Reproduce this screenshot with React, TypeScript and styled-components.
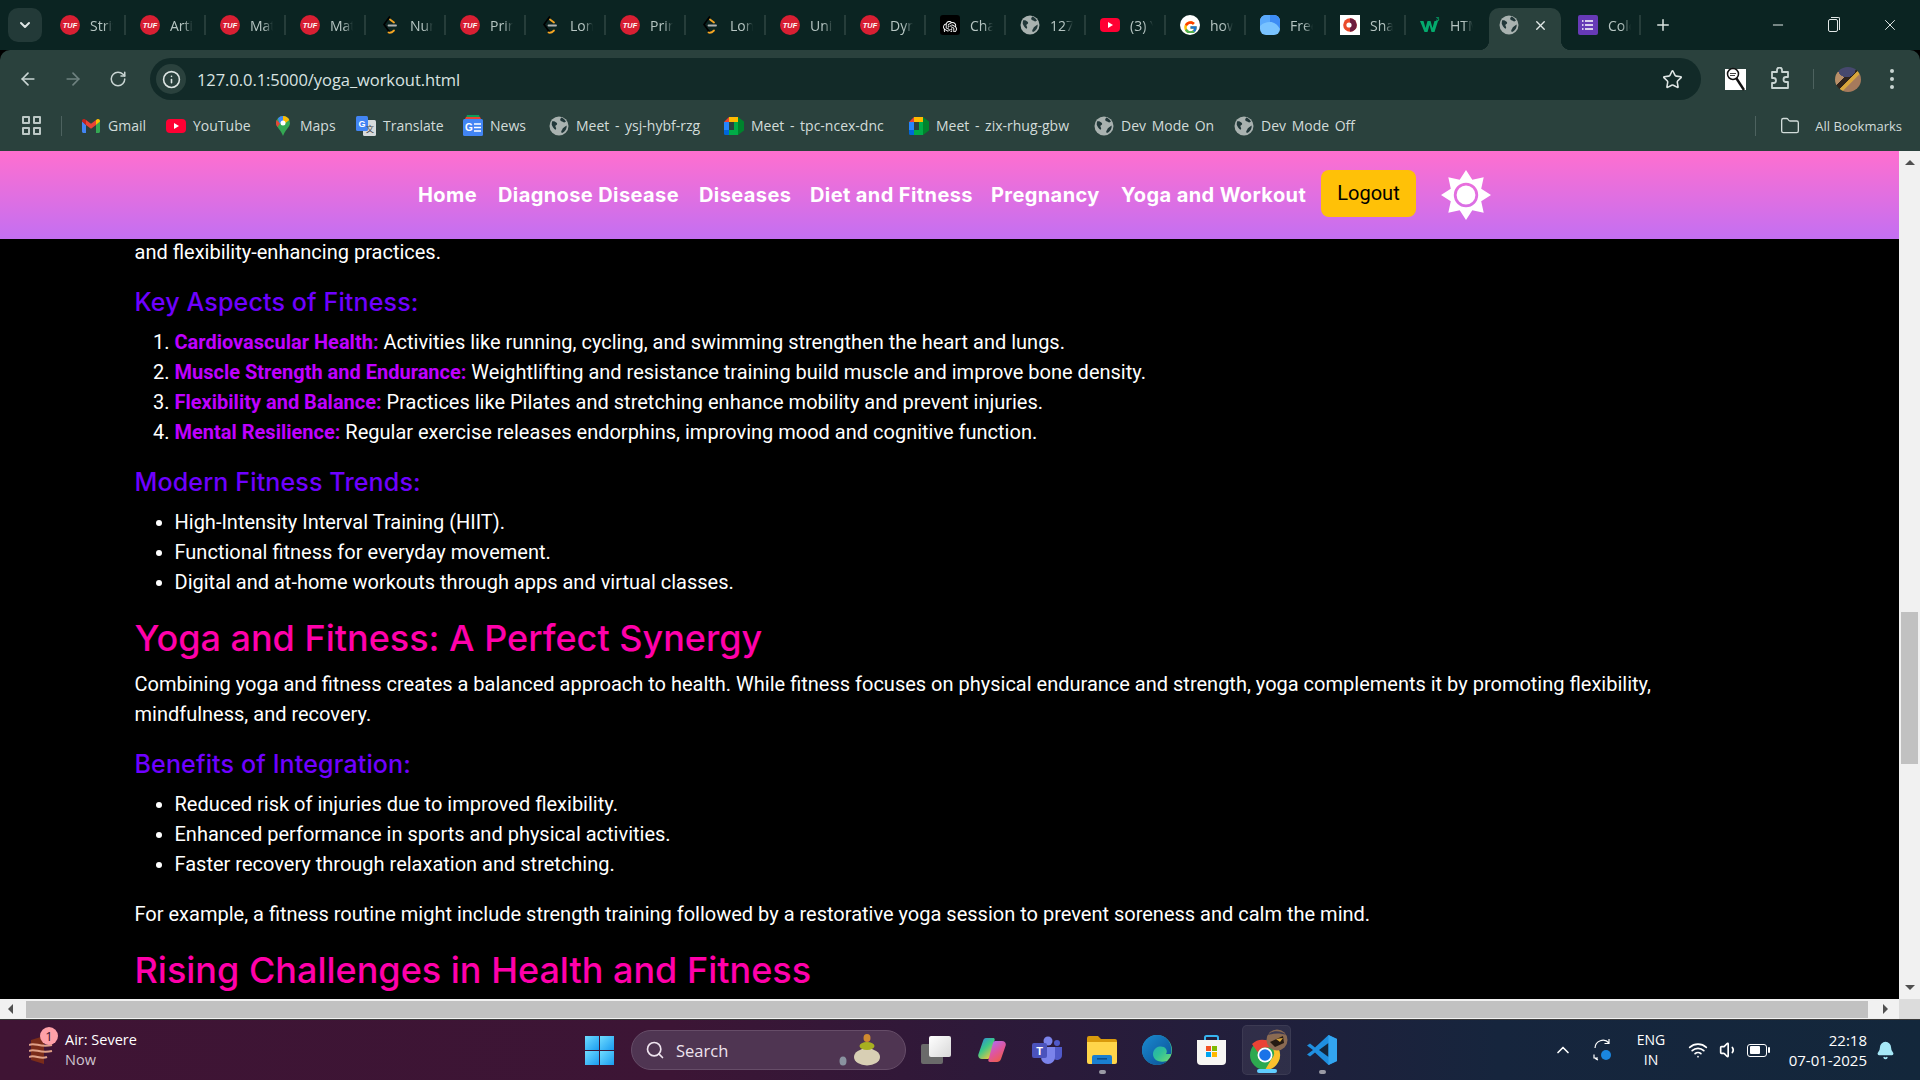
import React from 'react';
import styled, { createGlobalStyle } from 'styled-components';
import { ArrowLeft, ArrowRight, RotateCw, Info, Star, Folder, Minus, X, Plus, ChevronDown, ChevronUp, Search as SearchIcon, Wifi, Volume1, Bell } from 'lucide-react';
import { FcGoogle } from 'react-icons/fc';
import { SiOpenai } from 'react-icons/si';

const Global = createGlobalStyle`
  html, body { margin: 0; padding: 0; width: 1920px; height: 1080px; overflow: hidden; background: #000; }
  * { box-sizing: border-box; }
`;

const Screen = styled.div`
  width: 1920px; height: 1080px; display: flex; flex-direction: column; overflow: hidden;
  font-family: "Open Sans", "Noto Sans", sans-serif;
`;

/* ---------- favicons ---------- */
const Tuf = () => (
  <svg width="20" height="20" viewBox="0 0 20 20"><circle cx="10" cy="10" r="10" fill="#d81f33" /><text x="10" y="12.6" fontFamily="Liberation Sans" fontWeight="700" fontStyle="italic" fontSize="7.4" fill="#fff" textAnchor="middle">TUF</text></svg>
);
const Code = () => (
  <svg width="20" height="20" viewBox="0 0 20 20" fill="none"><path d="M9.500 2 4 9.500 9.500 17" stroke="#000" strokeWidth="1.700" strokeLinecap="round" /><path d="M10 4.500 14 7.500" stroke="#f5a623" strokeWidth="1.800" strokeLinecap="round" /><path d="M8.500 17.500c2 .8 3.500 0 5.500-2" stroke="#f5a623" strokeWidth="1.800" strokeLinecap="round" /><path d="M8.500 10.500h7.500" stroke="#b3b3b3" strokeWidth="1.800" strokeLinecap="round" /></svg>
);
const Globe = () => (
  <svg width="20" height="20" viewBox="0 0 20 20"><circle cx="10" cy="10" r="9.500" fill="#a9b2b0" /><path d="M3 5.500c2-.6 3.400.2 4.600 1.300 1 .9.600 2.200-.5 2.500-.9.300-.8 1.500-.2 2.300.6.800.2 2-.6 2.200-1.500-.9-3-3.200-3.600-5.200zM12.500 1.400c2 .8 3.800 2.600 4.500 4.200-.9 1-2.300 1-3 .3-.8-.8-2.600-.6-2.800-2-.1-1 .5-1.800 1.300-2.500zM17.600 9.500c.4 3-1.300 6.200-4.600 7.600-1-.6-1-2-.2-2.800.6-.6.5-1.800 1.400-2.400 1-.7 2.200-1.800 3.400-2.400z" fill="#22383a" /></svg>
);
const Yt = () => (
  <svg width="20" height="20" viewBox="0 0 20 20"><rect y="3" width="20" height="14" rx="4" fill="#ff0033" /><path d="M8 7l5 3-5 3z" fill="#fff" /></svg>
);
const G = () => (
  <svg width="20" height="20" viewBox="0 0 20 20"><circle cx="10" cy="10" r="10" fill="#fff" /><foreignObject x="2.500" y="2.500" width="15" height="15"><FcGoogle size={15} /></foreignObject></svg>
);
const Fresh = () => (
  <svg width="20" height="20" viewBox="0 0 20 20"><rect width="20" height="20" rx="6" fill="#79c3ff" /><path d="M10 0h4a6 6 0 0 1 6 6v8c-3-5-6-7-10-7z" fill="#3d8cf5" /><path d="M0 6a6 6 0 0 1 6-6h4v7C6 7 3 8 0 11z" fill="#5aa9fb" /></svg>
);
const Share = () => (
  <svg width="20" height="20" viewBox="0 0 20 20"><rect width="20" height="20" fill="#fff" /><circle cx="10" cy="10" r="6.800" fill="#ea4a2a" /><path d="M10 3.200a6.800 6.800 0 0 1 0 13.600z" fill="#6d1c3f" /><circle cx="9" cy="10" r="2.600" fill="#fff" /></svg>
);
const W3 = () => (
  <svg width="20" height="20" viewBox="0 0 20 20"><path d="M0 6h3.500l2 7 2-7h3l2 7 2-7H18l-3.500 11h-3L9.500 10l-2 7h-3z" fill="#04aa6d" /><text x="16" y="6" fontFamily="Liberation Sans" fontSize="6" fontWeight="700" fill="#04aa6d">3</text></svg>
);
const Chat = () => (
  <svg width="20" height="20" viewBox="0 0 20 20"><rect width="20" height="20" rx="3" fill="#000" /><foreignObject x="3" y="3" width="14" height="14"><SiOpenai size={14} color="#fff" /></foreignObject></svg>
);
const Forms = () => (
  <svg width="20" height="20" viewBox="0 0 20 20"><rect width="20" height="20" rx="2" fill="#673ab7" /><path d="M7 6h8M7 10h8M7 14h8" stroke="#fff" strokeWidth="1.600" /><path d="M4 6h1.500M4 10h1.500M4 14h1.500" stroke="#fff" strokeWidth="1.600" /></svg>
);
const Gmail = () => (
  <svg width="18" height="16" viewBox="0 0 18 14"><path d="M0 2v10.500C0 13.300.7 14 1.500 14H4V6z" fill="#4285f4" /><path d="M14 6v8h2.500c.8 0 1.500-.7 1.500-1.500V2z" fill="#34a853" /><path d="M4 6 9 9.800 14 6V1l-5 3.700L4 1z" fill="#ea4335" /><path d="M0 2.500 4 6V1L2.500.1C1.300-.4 0 .6 0 2z" fill="#c5221f" /><path d="M14 1v5l4-3.500V2c0-1.400-1.300-2.400-2.500-1.900z" fill="#fbbc04" /></svg>
);
const Maps = () => (
  <svg width="14" height="20" viewBox="0 0 14 20"><path d="M7 0a7 7 0 0 1 7 7c0 4-5 7-7 13-2-6-7-9-7-13a7 7 0 0 1 7-7z" fill="#34a853" /><path d="M2 2.200A7 7 0 0 1 7 0v4.500L3.500 8z" fill="#4285f4" /><path d="M7 0a7 7 0 0 1 6.300 4L7 9z" fill="#fbbc04" /><path d="M.6 4 4 7.500 1.500 11C.5 9.500 0 8.200 0 7c0-1 .2-2 .6-3z" fill="#ea4335" /><circle cx="7" cy="7" r="2.500" fill="#fff" /></svg>
);
const Translate = () => (
  <svg width="20" height="20" viewBox="0 0 20 20"><rect x="7" y="4" width="13" height="16" rx="1.500" fill="#d6dadc" /><rect width="12" height="15" rx="1.500" fill="#4285f4" /><text x="6" y="11" fontFamily="Liberation Sans" fontSize="9" fontWeight="700" fill="#fff" textAnchor="middle">G</text><text x="14" y="16" fontFamily="Noto Sans CJK SC" fontSize="8" fill="#444" textAnchor="middle">文</text></svg>
);
const News = () => (
  <svg width="20" height="22" viewBox="0 0 20 22"><path d="M3 3 4 0h12l1 3z" fill="#0c9d58" /><path d="M2 4 3 2h14l1 2z" fill="#ea4335" /><rect y="4" width="20" height="17" rx="1.500" fill="#4285f4" /><text x="6" y="16" fontFamily="Liberation Sans" fontSize="10" fontWeight="700" fill="#fff" textAnchor="middle">G</text><path d="M11 9h7M11 12.500h7M11 16h7" stroke="#fff" strokeWidth="1.500" /></svg>
);
const Meet = () => (
  <svg width="20" height="20" viewBox="0 0 20 20"><path d="M0 6 5 1v5z" fill="#ea4335" /><rect x="5" y="1" width="9" height="5" fill="#ffba00" /><rect y="6" width="5" height="8" fill="#2684fc" /><path d="M0 14h5v5H1.500A1.500 1.500 0 0 1 0 17.500z" fill="#0066da" /><rect x="5" y="14" width="9" height="5" fill="#00ac47" /><path d="M14 1v18l6-4.500v-9z" fill="#00832d" /><rect x="10" y="6" width="4" height="8" fill="#00ac47" /></svg>
);

const favicons: Record<string, React.FC> = { tuf: Tuf, code: Code, globe: Globe, yt: Yt, g: G, fresh: Fresh, share: Share, w3: W3, chat: Chat, forms: Forms };

/* ---------- tab strip ---------- */
const TabBar = styled.div`
  height: 50px; background: #0b2422; display: flex; align-items: flex-start; position: relative; flex: none;
`;
const TabMenu = styled.div`
  width: 34px; height: 34px; margin: 8px 4px 0 8px; border-radius: 10px; background: #233a38;
  color: #dfe6e5; display: flex; align-items: center; justify-content: center; flex: none;
`;
const Tab = styled.div<{ $sep: boolean; $w?: number }>`
  width: ${p => p.$w ?? 80}px; height: 50px; display: flex; align-items: center; padding-left: 14px; gap: 10px; flex: none; position: relative;
  &::after {
    content: ''; display: ${p => (p.$sep ? 'block' : 'none')};
    position: absolute; right: 0; top: 15px; width: 2px; height: 20px; background: #263d3a;
  }
`;
const FavSlot = styled.span`
  width: 20px; height: 20px; flex: none; display: flex; align-items: center; justify-content: center;
`;
const TabTitle = styled.span`
  width: 23px; overflow: hidden; white-space: nowrap; font-size: 14px; color: #b7c6c3;
  -webkit-mask-image: linear-gradient(90deg, #000 60%, transparent);
  mask-image: linear-gradient(90deg, #000 60%, transparent);
`;
const ActiveTab = styled.div`
  width: 72px; height: 42px; margin: 8px 3px 0; background: #2a413d; border-radius: 10px 10px 0 0; display: flex; align-items: center;
  padding: 0 0 8px 10px; gap: 14px; color: #e3e9e8; position: relative; flex: none;
  &::before, &::after { content: ''; position: absolute; bottom: 0; width: 10px; height: 10px; }
  &::before { left: -10px; background: radial-gradient(circle at 0 0, transparent 10px, #2a413d 10.500px); }
  &::after { right: -10px; background: radial-gradient(circle at 100% 0, transparent 10px, #2a413d 10.500px); }
`;
const NewTab = styled.div`
  width: 44px; height: 50px; display: flex; align-items: center; justify-content: center; color: #dbe3e1; flex: none;
`;
const WinControls = styled.div`
  margin-left: auto; display: flex; color: #e2e8e7; flex: none;
`;
const WinBtn = styled.div<{ $w: number }>`
  width: ${p => p.$w}px; height: 50px; display: flex; align-items: center; justify-content: center;
`;
const Restore = styled.span`
  width: 10px; height: 13px; border: 1.300px solid #e2e8e7; border-radius: 2px; position: relative;
  &::after { content: ''; position: absolute; top: -3px; right: -3px; width: 8px; height: 12px; border-top: 1.300px solid #e2e8e7; border-right: 1.300px solid #e2e8e7; border-radius: 0 2px 0 0; }
`;

/* ---------- toolbar ---------- */
const Toolbar = styled.div`
  height: 50px; background: #2a413d; border-radius: 10px 10px 0 0; display: flex; align-items: center; padding: 8px 0 0 5px; flex: none; margin-top: 0;
`;
const NavBtn = styled.div<{ $dim?: boolean }>`
  width: 45px; height: 42px; display: flex; align-items: center; justify-content: center; color: ${p => (p.$dim ? '#6f8280' : '#c9d5d3')}; flex: none;
`;
const Omnibox = styled.div`
  width: 1551px; height: 42px; margin-left: 10px; border-radius: 21px; background: #122a28; display: flex; align-items: center; padding-left: 6px; flex: none;
`;
const InfoChip = styled.div`
  width: 30px; height: 30px; border-radius: 50%; background: #2a413d; display: flex; align-items: center; justify-content: center; color: #dde5e3; flex: none;
`;
const Url = styled.div`
  margin-left: 11px; font-size: 16.500px; color: #d9e3e1; white-space: nowrap; font-family: "Open Sans", sans-serif; letter-spacing: -0.060px;
`;
const OmniStar = styled.div`
  margin-left: auto; margin-right: 18px; display: flex; color: #dfe6e5;
`;
const ToolIcon = styled.div<{ $ml?: number }>`
  width: 46px; height: 42px; display: flex; align-items: center; justify-content: center; flex: none; color: #c9d5d3; margin-left: ${p => p.$ml ?? 0}px;
`;
const ToolSep = styled.div`
  width: 1px; height: 20px; background: #4d625f; margin-left: 9px; flex: none;
`;
const LensBox = styled.div`
  width: 21px; height: 21px; background: #fff; display: flex; align-items: center; justify-content: center; overflow: visible;
`;
const Avatar = styled.div`
  width: 26px; height: 25px; border-radius: 50%; margin-left: 3px;
  background: radial-gradient(circle at 45% 5%, #46486e 0 32%, transparent 33%), linear-gradient(135deg, #b98f68 38%, #2f241c 39% 52%, #d9a63c 53% 62%, #a67a5c 63%);
`;
const DotsIcon = styled.div`
  display: flex; flex-direction: column; gap: 4px;
  span { width: 4px; height: 4px; border-radius: 50%; background: #c9d5d3; }
`;

/* ---------- bookmarks ---------- */
const Bookmarks = styled.div`
  height: 51px; background: #2a413d; display: flex; align-items: center; padding-left: 22px; flex: none;
`;
const AppsGrid = styled.div`
  width: 19px; height: 19px; display: grid; grid-template-columns: 8px 8px; gap: 3px; flex: none;
  span { border: 2px solid #bcc8c6; border-radius: 1px; }
`;
const BarSep = styled.div<{ $l: number; $r: number }>`
  width: 1px; height: 20px; background: #4d625f; margin: 0 ${p => p.$r}px 0 ${p => p.$l}px; flex: none;
`;
const Bookmark = styled.div<{ $w: number }>`
  width: ${p => p.$w}px; display: flex; align-items: center; gap: 7px; font-size: 14px; word-spacing: 2px; color: #d2dcda; white-space: nowrap; flex: none;
`;
const BmIcon = styled.span`
  width: 20px; height: 22px; display: flex; align-items: center; justify-content: center; flex: none;
`;
const AllBookmarks = styled.div`
  margin-left: auto; display: flex; align-items: center; font-size: 13px; color: #d2dcda; gap: 15px; padding-right: 18px;
`;

/* ---------- page ---------- */
const Viewport = styled.div`
  flex: 1; display: flex; min-height: 0; background: #000;
`;
const PageArea = styled.div`
  width: 1899px; display: flex; flex-direction: column; overflow: hidden;
`;
const NavBar = styled.nav`
  height: 88px; flex: none; position: relative; z-index: 1; display: flex; align-items: center; padding-left: 418px; padding-top: 1px;
  background: linear-gradient(180deg, #ff6fcf 0%, #c36ff2 100%);
`;
const NavLink = styled.a<{ $w: number }>`
  width: ${p => p.$w}px; margin-right: 20px; margin-bottom: 2px; flex: none; white-space: nowrap; font-family: Inter, sans-serif; font-weight: 700; font-size: 20px; letter-spacing: 0.400px; color: #fff;
`;
const LogoutBtn = styled.button`
  width: 95px; height: 47px; margin-left: -9px; margin-bottom: 4px; border: none; border-radius: 8px; background: #ffc107; color: #000; font-family: Roboto, sans-serif; font-size: 20px; flex: none; padding: 0 0 2px;
`;
const SunSlot = styled.div`
  width: 54px; height: 50px; margin-left: 25px; margin-bottom: 2px; flex: none;
`;
const Content = styled.main`
  margin-top: -2px; padding: 0 135px 0 134.500px; font-family: Roboto, sans-serif; font-size: 20px; line-height: 30px; color: #fff;
`;
const H2 = styled.h2`
  margin: 14px 0 4px; font-family: Inter, sans-serif; font-weight: 500; font-size: 36px; line-height: 54px; color: #ff00aa;
`;
const H3 = styled.h3`
  margin: 17px 0 7px; font-family: Inter, sans-serif; font-weight: 500; font-size: 25px; line-height: 36px; letter-spacing: 0.150px; color: #6f00ff;
`;
const Ordered = styled.ol`
  margin: 0; padding-left: 40px;
`;
const List = styled.ul`
  margin: 0; padding-left: 40px;
`;
const Para = styled.p`
  margin: 0;
  ${List} + & { margin-top: 20px; }
`;
const Term = styled.strong`
  font-weight: 700; color: #bf00ff;
`;

/* ---------- scrollbars ---------- */
const VBar = styled.div`
  width: 21px; flex: none; background: #f1f1f1; display: flex; flex-direction: column; align-items: center; position: relative;
`;
const ArrowUp = styled.div`
  margin-top: 9px; width: 0; height: 0; border-left: 5px solid transparent; border-right: 5px solid transparent; border-bottom: 5px solid #505050;
`;
const ArrowDown = styled.div`
  margin-top: auto; margin-bottom: 9px; width: 0; height: 0; border-left: 5px solid transparent; border-right: 5px solid transparent; border-top: 5px solid #505050;
`;
const VThumb = styled.div`
  width: 17px; height: 152px; background: #c1c1c1; margin-top: 447px;
`;
const HBar = styled.div`
  height: 21px; flex: none; display: flex; align-items: center; background: #f1f1f1; border-bottom: 1px solid #3a3a3a;
`;
const ArrowLeftTri = styled.div`
  margin-left: 8px; width: 0; height: 0; border-top: 5px solid transparent; border-bottom: 5px solid transparent; border-right: 5px solid #505050;
`;
const HThumb = styled.div`
  width: 1842px; height: 17px; margin-left: 13px; background: #c1c1c1;
`;
const ArrowRightTri = styled.div`
  margin-left: 15px; width: 0; height: 0; border-top: 5px solid transparent; border-bottom: 5px solid transparent; border-left: 5px solid #505050;
`;
const Corner = styled.div`
  margin-left: auto; width: 21px; height: 20px; background: #dcdcdc;
`;

/* ---------- taskbar ---------- */
const Taskbar = styled.footer`
  height: 60px; flex: none; display: flex; align-items: center; position: relative;
  background: linear-gradient(90deg, #3f1434 0%, #3c1535 35%, #2a1a3a 55%, #16253d 78%, #13273b 100%);
`;
const Widget = styled.div`
  width: 585px; height: 60px; display: flex; align-items: center; padding-left: 29px; position: relative; flex: none;
`;
const Badge = styled.span`
  position: absolute; left: 40px; top: 7px; width: 18px; height: 18px; border-radius: 50%; background: #ffa0a8; color: #3a1030; font-size: 13px; line-height: 18px; text-align: center; font-family: "Open Sans", sans-serif;
`;
const WidgetText = styled.div`
  margin-left: 12px; font-size: 14.500px; line-height: 20px; color: #fff; display: flex; flex-direction: column;
  span:last-child { color: #cfc4cf; }
`;
const WinLogo = styled.div`
  width: 29px; height: 29px; display: grid; grid-template-columns: 1fr 1fr; gap: 1px; flex: none;
  span { background: linear-gradient(135deg, #6fdcff, #1a9cf0); }
`;
const SearchBox = styled.div`
  width: 275px; height: 40px; margin-left: 17px; border-radius: 20px; background: #4f3552; border: 1px solid #664d68; display: flex; align-items: center; padding-left: 13px; color: #eee3ee; font-size: 16.500px; position: relative; flex: none;
`;
const SearchLabel = styled.span`
  margin-left: 11px;
`;
const Pebbles = styled.span`
  margin-left: auto; margin-right: 24px; display: flex;
`;
const TaskIcon = styled.div<{ $active?: boolean; $dot?: boolean }>`
  width: ${p => (p.$active ? 49 : 55)}px; margin: 0 ${p => (p.$active ? 3 : 0)}px; height: 50px; display: flex; align-items: center; justify-content: center; position: relative; flex: none;
  border-radius: 5px;
  ${p => p.$active && 'background: rgba(255,255,255,0.07); border: 1px solid rgba(255,255,255,0.06);'}
  ${p => p.$active && '&::after { content: ""; position: absolute; bottom: 1px; left: 14px; width: 20px; height: 4px; border-radius: 2px; background: #60cdff; }'}
  ${p => p.$dot && '&::after { content: ""; position: absolute; bottom: 1px; left: 50%; margin-left: -3px; width: 7px; height: 4px; border-radius: 2px; background: #9a9aa5; }'}
`;
const TaskView = styled.div`
  width: 32px; height: 40px; margin-left: 15px; margin-right: 11px; flex: none; position: relative;
`;
const TaskViewBack = styled.span`
  position: absolute; left: 0; top: 14px; width: 22px; height: 20px; background: #6a6a6a; border-radius: 2px;
`;
const TaskViewFront = styled.span`
  position: absolute; left: 8px; top: 6px; width: 22px; height: 21px; background: linear-gradient(135deg, #fff, #d8d8d8); border-radius: 2px;
`;
const Tray = styled.div`
  margin-left: auto; display: flex; align-items: center; height: 60px; color: #fff; flex: none;
`;
const TrayText = styled.div`
  width: 38px; margin-left: 17px; font-size: 14px; line-height: 20px; text-align: center; color: #fff;
`;
const TrayIcon = styled.div<{ $w: number; $ml?: number }>`
  width: ${p => p.$w}px; margin-left: ${p => p.$ml ?? 0}px; display: flex; justify-content: center; flex: none;
`;
const Clock = styled.div`
  width: 90px; margin-left: 8px; font-size: 15px; line-height: 20px; text-align: right; color: #fff;
`;
const Battery = styled.div`
  width: 20px; height: 13px; border: 1.500px solid #fff; border-radius: 3px; padding: 1.500px; position: relative;
  &::before { content: ''; display: block; width: 10px; height: 100%; background: #fff; border-radius: 1px; }
  &::after { content: ''; position: absolute; right: -4px; top: 2px; width: 2px; height: 6px; background: #fff; border-radius: 1px; }
`;

const tabs: [string, string][] = [
  ['tuf', 'Striver'], ['tuf', 'Article'], ['tuf', 'Matrix'], ['tuf', 'Matrix'], ['code', 'Number'], ['tuf', 'Print'], ['code', 'Longest'], ['tuf', 'Print'], ['code', 'Longest'],
  ['tuf', 'Union'], ['tuf', 'Dynamic'], ['chat', 'ChatGPT'], ['globe', '127.0.0.1'], ['yt', '(3) You'], ['g', 'how to'], ['fresh', 'Free'], ['share', 'Share'], ['w3', 'HTML'],
];

const bookmarks: [React.FC, string, number][] = [
  [Gmail, 'Gmail', 85], [Yt, 'YouTube', 107], [Maps, 'Maps', 83], [Translate, 'Translate', 107], [News, 'News', 86], [Globe, 'Meet - ysj-hybf-rzg', 175], [Meet, 'Meet - tpc-ncex-dnc', 185], [Meet, 'Meet - zix-rhug-gbw', 185], [Globe, 'Dev Mode On', 140], [Globe, 'Dev Mode Off', 140],
];

const Sun = () => (
  <svg width="50" height="50" viewBox="0 0 50 50">
    <defs>
      <mask id="sun-ring">
        <rect width="50" height="50" fill="#fff" />
        <circle cx="25" cy="25" r="10.800" fill="none" stroke="#000" strokeWidth="2.800" />
      </mask>
    </defs>
    <path mask="url(#sun-ring)" fill="#fff" d="M25 0l6.300 9.800 11.400-2.500-2.500 11.400L50 25l-9.800 6.300 2.500 11.400-11.400-2.500L25 50l-6.300-9.800-11.400 2.500 2.500-11.400L0 25l9.800-6.300-2.500-11.400 11.400 2.500z" />
  </svg>
);

const Copilot = () => (
  <svg width="28" height="26" viewBox="0 0 28 26">
    <defs>
      <linearGradient id="cpa" x1="0" y1="0" x2="0.700" y2="1"><stop offset="0" stopColor="#2f7fe8" /><stop offset=".5" stopColor="#3ac78a" /><stop offset="1" stopColor="#f2c53d" /></linearGradient>
      <linearGradient id="cpb" x1="0.200" y1="0" x2="0.800" y2="1"><stop offset="0" stopColor="#b06cf0" /><stop offset=".5" stopColor="#e0559b" /><stop offset="1" stopColor="#f0603c" /></linearGradient>
    </defs>
    <path d="M8 1h7c1.500 0 2 1 1.500 2.500L12 20c-.5 1.500-1.500 2-3 2H4c-3 0-4.500-2.500-3.500-5L5 4c.5-2 1.500-3 3-3z" fill="url(#cpa)" />
    <path d="M19 25h-7c-1.500 0-2-1-1.500-2.500L15 6c.5-1.500 1.500-2 3-2h6c3 0 4.500 2.500 3.500 5L23 22c-.5 2-2.500 3-4 3z" fill="url(#cpb)" />
  </svg>
);
const Teams = () => (
  <svg width="30" height="28" viewBox="0 0 30 28"><circle cx="16" cy="5" r="4.500" fill="#7b83eb" /><circle cx="25" cy="7" r="3" fill="#5059c9" /><path d="M20 11h10v8a5 5 0 0 1-9 3z" fill="#5059c9" /><path d="M9 11h14v10a7 7 0 0 1-14 0z" fill="#7b83eb" /><rect y="7" width="15" height="15" rx="2" fill="#4b53bc" /><text x="7.500" y="19" fontFamily="Liberation Sans" fontSize="11" fontWeight="700" fill="#fff" textAnchor="middle">T</text></svg>
);
const Explorer = () => (
  <svg width="30" height="28" viewBox="0 0 30 28"><path d="M0 2a2 2 0 0 1 2-2h9l3 3h14a2 2 0 0 1 2 2v4H0z" fill="#d99a0c" /><path d="M0 6h30v20a2 2 0 0 1-2 2H2a2 2 0 0 1-2-2z" fill="#ffd54a" /><path d="M5 28v-7a2 2 0 0 1 2-2h16a2 2 0 0 1 2 2v7z" fill="#1a7fd0" /><rect x="10" y="22" width="10" height="1.600" fill="#0b4f8f" /></svg>
);
const Edge = () => (
  <svg width="30" height="30" viewBox="0 0 30 30">
    <defs>
      <linearGradient id="eda" x1="0" y1="0" x2="1" y2="1"><stop offset="0" stopColor="#1d8fd8" /><stop offset=".6" stopColor="#2dbf9a" /><stop offset="1" stopColor="#7fe36a" /></linearGradient>
      <linearGradient id="edb" x1="0" y1="0" x2="1" y2="1"><stop offset="0" stopColor="#1a8ad0" /><stop offset="1" stopColor="#0b4f95" /></linearGradient>
    </defs>
    <circle cx="15" cy="15" r="15" fill="url(#eda)" />
    <path d="M15 0C7 0 0 7 0 15c0 8 6 15 15 15 4 0 7-1 10-4-4 1-8 1-11-1-4-3-4-9 0-12 3-2 8-2 10 1 1 2 1 3 0 5h5C31 9 25 0 15 0z" fill="url(#edb)" />
  </svg>
);
const Store = () => (
  <svg width="29" height="30" viewBox="0 0 29 30"><path d="M8 6V2.500A1.500 1.500 0 0 1 9.500 1h10A1.500 1.500 0 0 1 21 2.500V6" fill="none" stroke="#37b4ef" strokeWidth="2" /><path d="M0 5h29v21a4 4 0 0 1-4 4H4a4 4 0 0 1-4-4z" fill="#f7f6f3" /><rect x="9" y="11" width="5" height="5" fill="#f25022" /><rect x="15" y="11" width="5" height="5" fill="#7fba00" /><rect x="9" y="17" width="5" height="5" fill="#00a4ef" /><rect x="15" y="17" width="5" height="5" fill="#ffb900" /></svg>
);
const Chrome = () => (
  <svg width="46" height="44" viewBox="0 0 46 44">
    <circle cx="21" cy="27" r="15" fill="#2da94f" />
    <path d="M21 12a15 15 0 0 1 13 7.500H21a7.500 7.500 0 0 0-7 5L8 16a15 15 0 0 1 13-4z" fill="#ea4335" />
    <path d="M34 19.500a15 15 0 0 1-13 22.500l6.500-11a7.500 7.500 0 0 0 0-11.500z" fill="#fbc02d" />
    <circle cx="21" cy="27" r="7.500" fill="#fff" />
    <circle cx="21" cy="27" r="5.800" fill="#1a73e8" />
    <circle cx="33" cy="12" r="10.500" fill="#8a6a52" />
    <path d="M24 7c3-5 14-5 18 0-5-2-12-2-18 0z" fill="#3d3a52" />
    <path d="M26 14l13-6 1 7-9 4z" fill="#241a12" />
    <path d="M32 11l7-1-3 4z" fill="#d9a63c" />
  </svg>
);
const VsCode = () => (
  <svg width="30" height="30" viewBox="0 0 30 30">
    <path d="M21.500 0 30 4v22l-8.500 4L8 17.500 3 21.500 0 19.500 6 15 0 10.500l3-2 5 4z" fill="#1f8fe0" />
    <path d="M21.500 8 12 15l9.500 7z" fill="#13263c" />
    <path d="M21.500 0 30 4v22l-8.500 4z" fill="#33a5f0" />
  </svg>
);
const Sync = () => (
  <svg width="22" height="26" viewBox="0 0 22 26" fill="none"><path d="M3 11a8 8 0 0 1 14-5M17 2v4.500h-4.500" stroke="#fff" strokeWidth="1.200" /><path d="M6 21H2v-3.500M3 21a8 8 0 0 0 3 2" stroke="#fff" strokeWidth="1.200" /><circle cx="14" cy="18" r="5" fill="#1a86e0" /></svg>
);
const AirIcon = () => (
  <svg width="24" height="30" viewBox="0 0 24 30"><path d="M2 5 15 1v28L2 25z" fill="#7a2c1a" /><path d="M0 10c6-3 11 3 23 0M0 16c6-3 11 3 23 0M0 22c6-3 11 3 18 0" stroke="#e0a088" strokeWidth="2" fill="none" /></svg>
);
const PebbleArt = () => (
  <svg width="42" height="32" viewBox="0 0 42 32"><ellipse cx="4" cy="27" rx="3.500" ry="4.500" fill="#8a93a0" /><ellipse cx="28" cy="23" rx="13" ry="8.500" fill="#d8cfb4" /><ellipse cx="28" cy="12" rx="7.500" ry="4" fill="#a8b020" /><ellipse cx="28" cy="4" rx="3.500" ry="4" fill="#d08a30" /></svg>
);
const Lens = () => (
  <svg width="20" height="24" viewBox="0 0 20 24" fill="none"><circle cx="8" cy="7" r="5.500" stroke="#111" strokeWidth="1.500" /><path d="M11.500 11.500 19 23" stroke="#111" strokeWidth="2.400" /><path d="M5 6.500h6M5 8.500h5" stroke="#444" strokeWidth="1" /></svg>
);
const Extension = () => (
  <svg width="22" height="24" viewBox="0 0 22 24" fill="none" stroke="#c9d5d3" strokeWidth="1.800" strokeLinejoin="round"><path d="M2 5h5V3a2.500 2.500 0 0 1 5 0v2h6v5h-2a2.500 2.500 0 0 0 0 5h2v6H2v-5h1.500a2.500 2.500 0 0 0 0-5H2z" /></svg>
);

export default function App() {
  return (
    <Screen>
      <Global />
      <TabBar>
        <TabMenu><ChevronDown size={16} strokeWidth={3} /></TabMenu>
        {tabs.map(([icon, title], i) => {
          const Icon = favicons[icon];
          return (
            <Tab key={i} $sep={i < tabs.length - 1}>
              <FavSlot><Icon /></FavSlot>
              <TabTitle>{title}</TabTitle>
            </Tab>
          );
        })}
        <ActiveTab>
          <FavSlot><Globe /></FavSlot>
          <X size={15} strokeWidth={2.2} />
        </ActiveTab>
        <Tab $sep $w={77}>
          <FavSlot><Forms /></FavSlot>
          <TabTitle>Color</TabTitle>
        </Tab>
        <NewTab><Plus size={18} strokeWidth={2} /></NewTab>
        <WinControls>
          <WinBtn $w={55}><Minus size={16} strokeWidth={1.5} /></WinBtn>
          <WinBtn $w={55}><Restore /></WinBtn>
          <WinBtn $w={60}><X size={18} strokeWidth={1.3} /></WinBtn>
        </WinControls>
      </TabBar>

      <Toolbar>
        <NavBtn><ArrowLeft size={20} /></NavBtn>
        <NavBtn $dim><ArrowRight size={20} /></NavBtn>
        <NavBtn><RotateCw size={18} /></NavBtn>
        <Omnibox>
          <InfoChip><Info size={19} /></InfoChip>
          <Url>127.0.0.1:5000/yoga_workout.html</Url>
          <OmniStar><Star size={21} strokeWidth={1.8} /></OmniStar>
        </Omnibox>
        <ToolIcon $ml={11}><LensBox><Lens /></LensBox></ToolIcon>
        <ToolIcon><Extension /></ToolIcon>
        <ToolSep />
        <ToolIcon $ml={9}><Avatar /></ToolIcon>
        <ToolIcon><DotsIcon><span /><span /><span /></DotsIcon></ToolIcon>
      </Toolbar>

      <Bookmarks>
        <AppsGrid><span /><span /><span /><span /></AppsGrid>
        <BarSep $l={20} $r={19} />
        {bookmarks.map(([Icon, label, w]) => (
          <Bookmark key={label} $w={w}>
            <BmIcon><Icon /></BmIcon>
            {label}
          </Bookmark>
        ))}
        <AllBookmarks>
          <BarSep $l={0} $r={9} />
          <Folder size={20} strokeWidth={1.6} />
          All Bookmarks
        </AllBookmarks>
      </Bookmarks>

      <Viewport>
        <PageArea>
          <NavBar>
            <NavLink $w={60}>Home</NavLink>
            <NavLink $w={181}>Diagnose Disease</NavLink>
            <NavLink $w={91}>Diseases</NavLink>
            <NavLink $w={161}>Diet and Fitness</NavLink>
            <NavLink $w={110}>Pregnancy</NavLink>
            <NavLink $w={189}>Yoga and Workout</NavLink>
            <LogoutBtn>Logout</LogoutBtn>
            <SunSlot><Sun /></SunSlot>
          </NavBar>
          <Content>
            <Para>and flexibility-enhancing practices.</Para>
            <H3>Key Aspects of Fitness:</H3>
            <Ordered>
              <li><Term>Cardiovascular Health:</Term> Activities like running, cycling, and swimming strengthen the heart and lungs.</li>
              <li><Term>Muscle Strength and Endurance:</Term> Weightlifting and resistance training build muscle and improve bone density.</li>
              <li><Term>Flexibility and Balance:</Term> Practices like Pilates and stretching enhance mobility and prevent injuries.</li>
              <li><Term>Mental Resilience:</Term> Regular exercise releases endorphins, improving mood and cognitive function.</li>
            </Ordered>
            <H3>Modern Fitness Trends:</H3>
            <List>
              <li>High-Intensity Interval Training (HIIT).</li>
              <li>Functional fitness for everyday movement.</li>
              <li>Digital and at-home workouts through apps and virtual classes.</li>
            </List>
            <H2>Yoga and Fitness: A Perfect Synergy</H2>
            <Para>Combining yoga and fitness creates a balanced approach to health. While fitness focuses on physical endurance and strength, yoga complements it by promoting flexibility, mindfulness, and recovery.</Para>
            <H3>Benefits of Integration:</H3>
            <List>
              <li>Reduced risk of injuries due to improved flexibility.</li>
              <li>Enhanced performance in sports and physical activities.</li>
              <li>Faster recovery through relaxation and stretching.</li>
            </List>
            <Para>For example, a fitness routine might include strength training followed by a restorative yoga session to prevent soreness and calm the mind.</Para>
            <H2>Rising Challenges in Health and Fitness</H2>
          </Content>
        </PageArea>
        <VBar>
          <ArrowUp />
          <VThumb />
          <ArrowDown />
        </VBar>
      </Viewport>
      <HBar>
        <ArrowLeftTri />
        <HThumb />
        <ArrowRightTri />
        <Corner />
      </HBar>

      <Taskbar>
        <Widget>
          <AirIcon />
          <Badge>1</Badge>
          <WidgetText><span>Air: Severe</span><span>Now</span></WidgetText>
        </Widget>
        <WinLogo><span /><span /><span /><span /></WinLogo>
        <SearchBox>
          <SearchIcon size={20} strokeWidth={2} />
          <SearchLabel>Search</SearchLabel>
          <Pebbles><PebbleArt /></Pebbles>
        </SearchBox>
        <TaskView><TaskViewBack /><TaskViewFront /></TaskView>
        <TaskIcon><Copilot /></TaskIcon>
        <TaskIcon><Teams /></TaskIcon>
        <TaskIcon $dot><Explorer /></TaskIcon>
        <TaskIcon><Edge /></TaskIcon>
        <TaskIcon><Store /></TaskIcon>
        <TaskIcon $active><Chrome /></TaskIcon>
        <TaskIcon $dot><VsCode /></TaskIcon>
        <Tray>
          <TrayIcon $w={20}><ChevronUp size={20} strokeWidth={2} /></TrayIcon>
          <TrayIcon $w={24} $ml={18}><Sync /></TrayIcon>
          <TrayText>ENG<br />IN</TrayText>
          <TrayIcon $w={22} $ml={17}><Wifi size={20} /></TrayIcon>
          <TrayIcon $w={22} $ml={9}><Volume1 size={20} /></TrayIcon>
          <TrayIcon $w={24} $ml={5}><Battery /></TrayIcon>
          <Clock>22:18<br />07-01-2025</Clock>
          <TrayIcon $w={20} $ml={8}><Bell size={19} color="#a6e8f7" fill="#a6e8f7" /></TrayIcon>
          <TrayIcon $w={25} />
        </Tray>
      </Taskbar>
    </Screen>
  );
}
